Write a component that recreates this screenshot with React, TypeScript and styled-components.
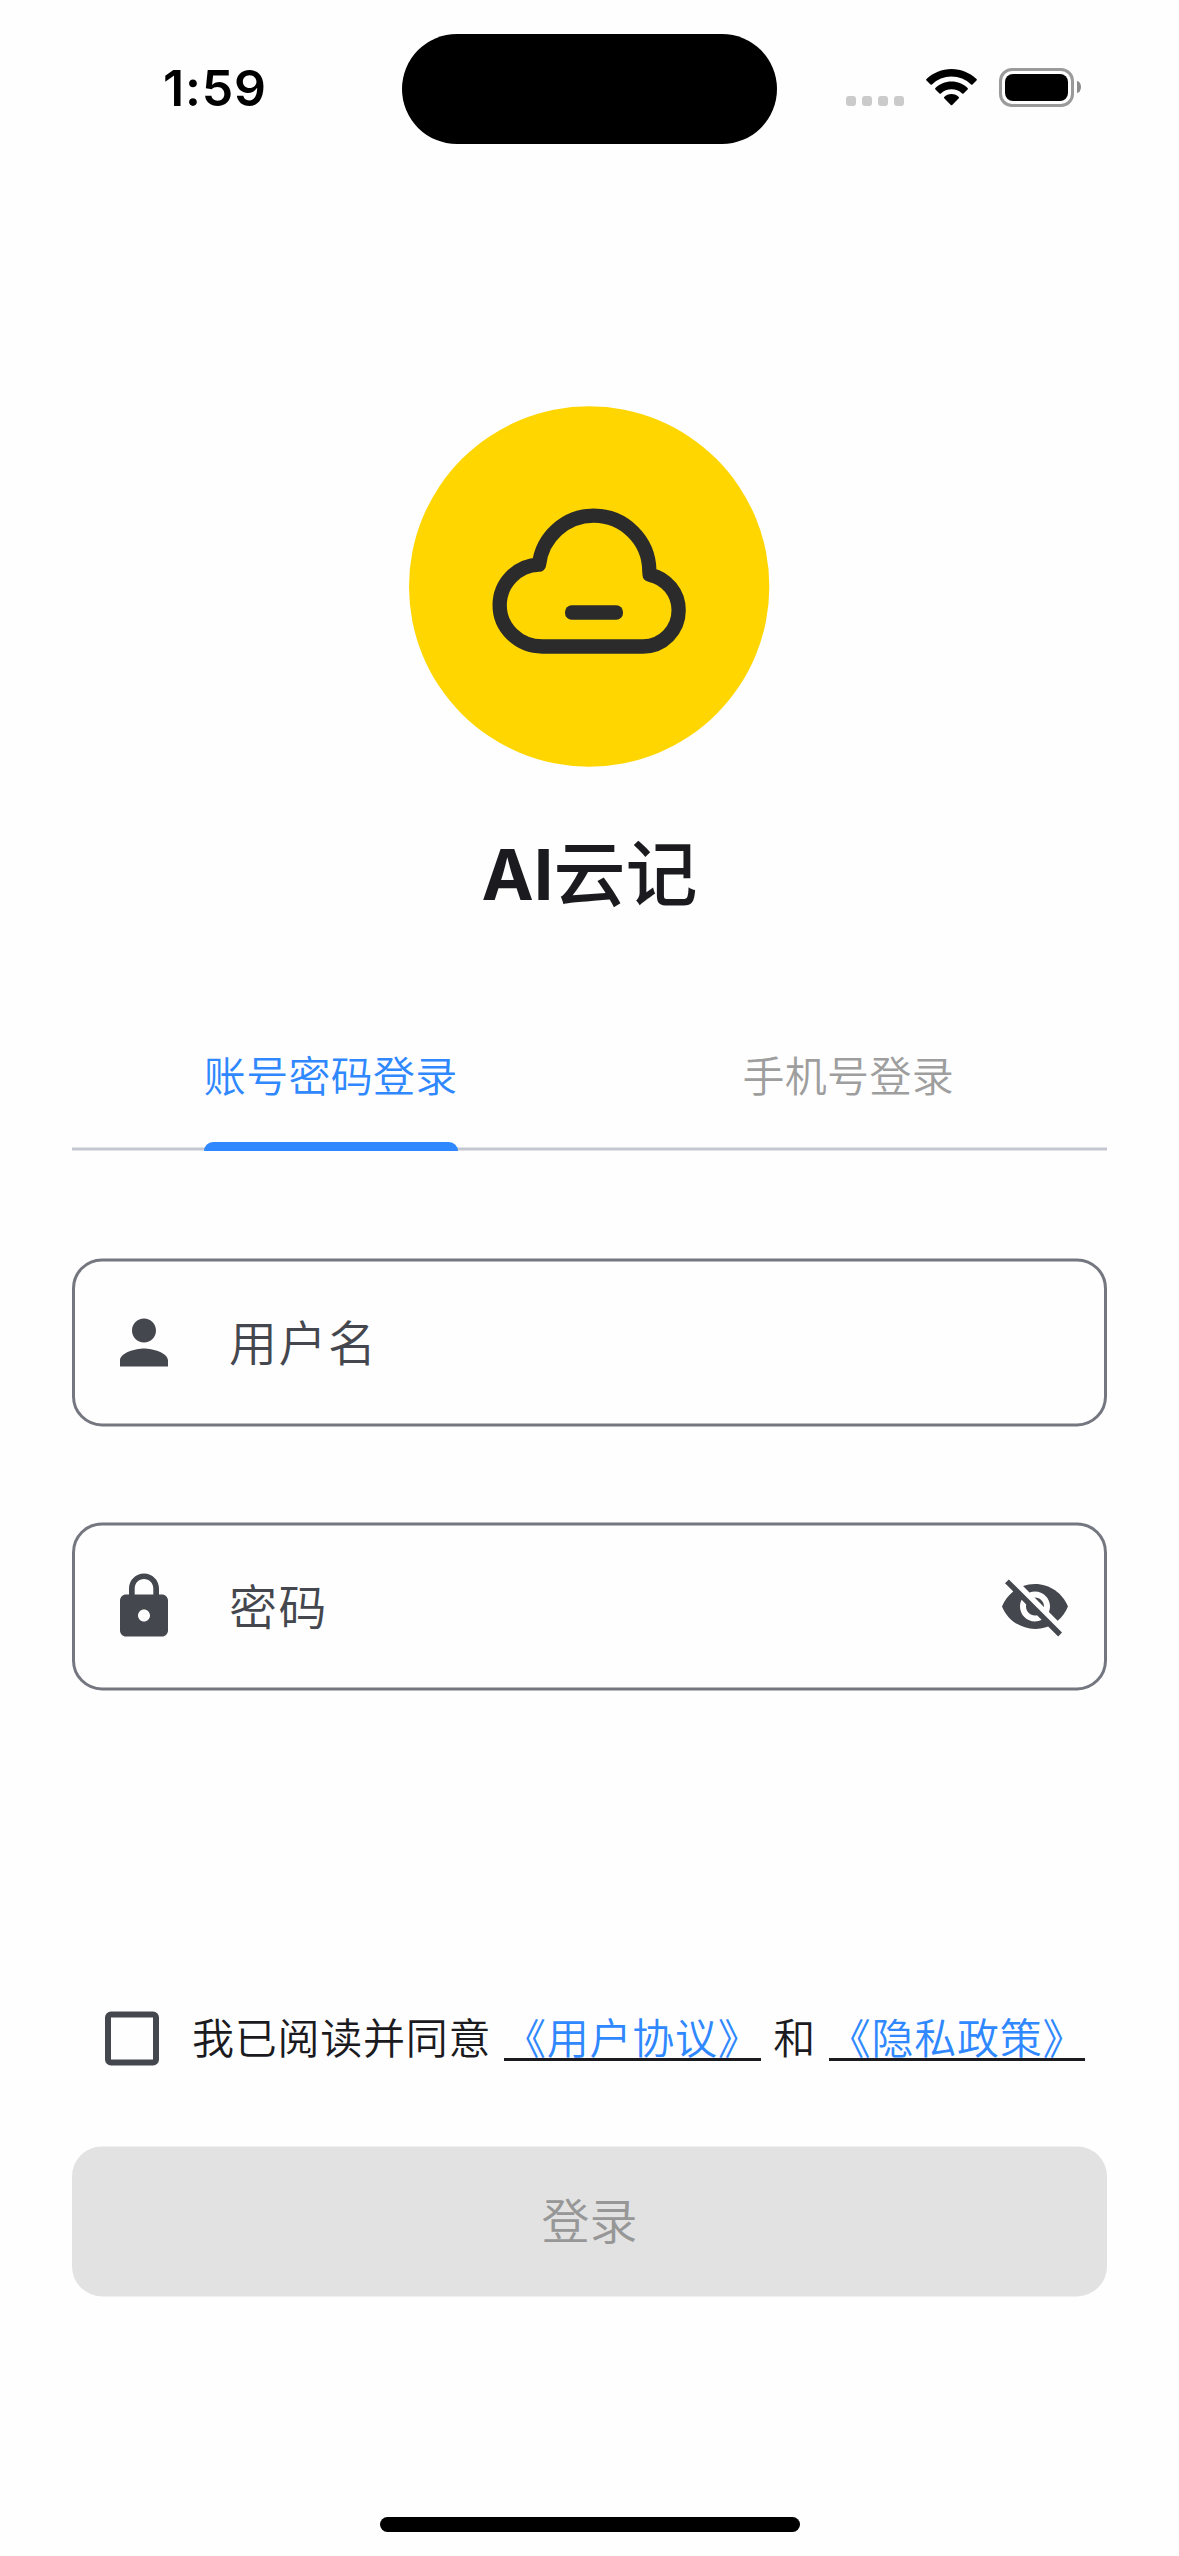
import React, { useState } from 'react';
import styled, { createGlobalStyle } from 'styled-components';

const sans = "'Inter', 'Noto Sans CJK SC', sans-serif";
const cjk = "'Noto Sans CJK SC', sans-serif";
const ink = '#1b1b1f';
const iconInk = '#44474e';
const outline = '#74777f';
const blue = '#2f88ff';

const GlobalStyle = createGlobalStyle`
  *, *::before, *::after { box-sizing: border-box; }
  html, body { margin: 0; padding: 0; background: #fefefe; }
  button { font: inherit; border: 0; background: none; padding: 0; margin: 0; }
`;

const Screen = styled.div`
  width: 1179px;
  height: 2556px;
  display: flex;
  flex-direction: column;
  background: #fefefe;
  color: ${ink};
  font-family: ${cjk};
  overflow: hidden;
`;

const StatusBar = styled.header`
  height: 177px;
  flex: none;
  display: grid;
  grid-template-columns: 402px 375px 402px;
  padding-top: 34px;
`;

const Clock = styled.div`
  padding: 23px 0 0 163px;
  font: 600 50px/62px ${sans};
  letter-spacing: 0.8px;
  color: #000;
`;

const Island = styled.div`
  height: 110px;
  border-radius: 55px;
  background: #000;
`;

const Indicators = styled.div`
  display: flex;
  align-items: flex-start;
  padding: 34px 0 0 69px;
`;

const SignalDots = styled.div`
  display: flex;
  gap: 6px;
  padding-top: 28px;
  margin-right: 22px;
`;

const Dot = styled.i`
  width: 10px;
  height: 10px;
  border-radius: 3px;
  background: #cbcbcb;
`;

const WifiIcon = styled.svg`
  width: 51px;
  height: 38px;
  margin: 1px 22px 0 0;
`;

const BatteryBody = styled.div`
  width: 75px;
  height: 39px;
  padding: 3px;
  border: 3px solid #9a9a9a;
  border-radius: 13px;
`;

const BatteryFill = styled.div`
  height: 27px;
  border-radius: 8px;
  background: #000;
`;

const BatteryCap = styled.div`
  width: 4px;
  height: 12px;
  margin: 13px 0 0 3px;
  border-radius: 0 4px 4px 0 / 0 6px 6px 0;
  background: #8c8c8c;
`;

const Content = styled.main`
  display: flex;
  flex-direction: column;
  padding: 229px 72px 0;
  flex: 1;
`;

const Logo = styled.svg`
  width: 361px;
  height: 361px;
  align-self: center;
  display: block;
`;

const Title = styled.h1`
  margin: 54px 0 0;
  height: 96px;
  font: 500 72px/96px ${cjk};
  text-align: center;
  color: ${ink};
`;

const Latin = styled.span`
  font: 700 70px/96px ${sans};
`;

const Tabs = styled.nav`
  display: grid;
  grid-template-columns: 1fr 1fr;
  justify-items: center;
  height: 144px;
  margin-top: 90px;
  background: linear-gradient(#e2e3e8, #e2e3e8 1px, #c4c6d0 1px, #c4c6d0 3px, #e2e3e8 3px) left bottom / 100% 4px no-repeat;
`;

const Tab = styled.button<{ $active: boolean }>`
  display: flex;
  flex-direction: column;
  justify-content: space-between;
  height: 144px;
  padding-top: 37px;
  font: 350 42px/60px ${cjk};
  letter-spacing: 0.3px;
  color: ${(p) => (p.$active ? blue : '#9e9e9e')};
  &::after {
    content: '';
    height: 9px;
    border-radius: 9px 9px 0 0;
    background: ${(p) => (p.$active ? blue : 'transparent')};
  }
`;

const Field = styled.label<{ $gap: number }>`
  display: flex;
  align-items: center;
  height: 168px;
  margin-top: ${(p) => p.$gap}px;
  padding: 0 33px;
  border: 3px solid ${outline};
  border-radius: 30px;
  transform: translateY(0.4px);
`;

const FieldIcon = styled.svg`
  width: 72px;
  height: 72px;
  flex: none;
  fill: ${iconInk};
`;

const Input = styled.input`
  flex: 1;
  min-width: 0;
  height: 72px;
  margin: 0 0 4px 49px;
  padding: 0;
  border: 0;
  outline: 0;
  background: transparent;
  font: 350 48px/72px ${cjk};
  letter-spacing: 1.5px;
  color: ${ink};
  &::placeholder { color: ${iconInk}; opacity: 1; }
`;

const Agreement = styled.div`
  display: flex;
  align-items: flex-start;
  height: 60px;
  margin-top: 318px;
  padding-left: 33px;
  font: 350 42px/56px ${cjk};
  letter-spacing: 0.75px;
  white-space: nowrap;
`;

const Checkbox = styled.button`
  width: 54px;
  height: 54px;
  margin: 3px 33px 0 0;
  border: 6px solid ${iconInk};
  border-radius: 6px;
  transform: translateY(0.4px);
`;

const Link = styled.a`
  height: 53px;
  margin: 0 12.75px;
  color: ${blue};
  border-bottom: 3px solid ${ink};
`;

const Submit = styled.button`
  height: 150px;
  margin-top: 78px;
  padding-bottom: 5px;
  border-radius: 30px;
  background: #e2e2e2;
  color: #979797;
  font: 350 48px/145px ${cjk};
  transform: translateY(0.4px);
`;

const HomeIndicator = styled.div`
  width: 420px;
  height: 15px;
  margin: 0 auto 24px;
  flex: none;
  border-radius: 8px;
  background: #000;
`;

const tabs = ['账号密码登录', '手机号登录'];

export default function App() {
  const [active, setActive] = useState(0);
  return (
    <Screen>
      <GlobalStyle />
      <StatusBar>
        <Clock>1:59</Clock>
        <Island />
        <Indicators>
          <SignalDots>
            <Dot /><Dot /><Dot /><Dot />
          </SignalDots>
          <WifiIcon viewBox="0 0 51 38">
            <path d="M25.5 0C35.2 0 44 3.8 50.5 10.1Q51.2 10.8 50.5 11.5L46.5 15.5Q45.8 16 45.1 15.4A28.2 28.2 0 0 0 5.9 15.4Q5.2 16 4.5 15.5L.5 11.5Q-.2 10.8 .5 10.1C7 3.8 15.8 0 25.5 0Z" />
            <path d="M25.5 12.5C31.8 12.5 37.5 15 41.6 19Q42.3 19.7 41.6 20.4L37.5 24.4Q36.8 25 36.1 24.4A15.8 15.8 0 0 0 14.9 24.4Q14.2 25 13.5 24.4L9.4 20.4Q8.7 19.7 9.4 19C13.5 15 19.2 12.5 25.5 12.5Z" />
            <path d="M25.5 25C28.4 25 31 26.1 32.8 28Q33.4 28.7 32.8 29.3L26.2 36Q25.5 36.6 24.8 36L18.2 29.3Q17.6 28.7 18.2 28C20 26.1 22.6 25 25.5 25Z" />
          </WifiIcon>
          <BatteryBody><BatteryFill /></BatteryBody>
          <BatteryCap />
        </Indicators>
      </StatusBar>

      <Content>
        <Logo viewBox="58 47 1083 1083">
          <circle cx="598.5" cy="588.5" r="540.5" fill="#ffd600" />
          <path
            d="M458 768.5A128 123.5 0 0 1 330 645A122.1 122.1 0 0 1 448 523A165.6 165.6 0 0 1 612 376A167 167 0 0 1 779 541L780 553A109.2 109.2 0 0 1 867 660A107 108.5 0 0 1 760 768.5Z"
            fill="none" stroke="#2b2b2b" strokeWidth="43" strokeLinejoin="round"
          />
          <rect x="526" y="645" width="174" height="43" rx="20" fill="#2b2b2b" />
        </Logo>
        <Title><Latin>AI</Latin>云记</Title>

        <Tabs>
          {tabs.map((t, i) => (
            <Tab key={t} $active={i === active} onClick={() => setActive(i)}>{t}</Tab>
          ))}
        </Tabs>

        <Field $gap={107}>
          <FieldIcon viewBox="0 0 24 24">
            <path d="M12 12c2.21 0 4-1.79 4-4s-1.79-4-4-4-4 1.79-4 4 1.79 4 4 4zm0 2c-2.67 0-8 1.34-8 4v2h16v-2c0-2.66-5.33-4-8-4z" />
          </FieldIcon>
          <Input placeholder="用户名" />
        </Field>
        <Field $gap={96}>
          <FieldIcon viewBox="0 0 24 24">
            <path d="M18 8h-1V6c0-2.76-2.24-5-5-5S7 3.24 7 6v2H6c-1.1 0-2 .9-2 2v10c0 1.1.9 2 2 2h12c1.1 0 2-.9 2-2V10c0-1.1-.9-2-2-2zm-6 9c-1.1 0-2-.9-2-2s.9-2 2-2 2 .9 2 2-.9 2-2 2zm3.1-9H8.9V6c0-1.71 1.39-3.1 3.1-3.1s3.1 1.39 3.1 3.1v2z" />
          </FieldIcon>
          <Input type="password" placeholder="密码" />
          <FieldIcon viewBox="0 0 24 24">
            <path d="M12 7c2.76 0 5 2.24 5 5 0 .65-.13 1.26-.36 1.83l2.92 2.92c1.51-1.26 2.7-2.89 3.43-4.75-1.73-4.39-6-7.5-11-7.5-1.4 0-2.74.25-3.98.7l2.16 2.16C10.74 7.13 11.35 7 12 7zM2 4.27l2.28 2.28.46.46C3.08 8.3 1.78 10.02 1 12c1.73 4.39 6 7.5 11 7.5 1.55 0 3.03-.3 4.38-.84l.42.42L19.73 22 21 20.73 3.27 3 2 4.27zM7.53 9.8l1.55 1.55c-.05.21-.08.43-.08.65 0 1.66 1.34 3 3 3 .22 0 .44-.03.65-.08l1.55 1.55c-.67.33-1.41.53-2.2.53-2.76 0-5-2.24-5-5 0-.79.2-1.53.53-2.2zm4.31-.78l3.15 3.15.02-.16c0-1.66-1.34-3-3-3l-.17.01z" />
          </FieldIcon>
        </Field>

        <Agreement>
          <Checkbox aria-label="同意" />
          我已阅读并同意
          <Link>《用户协议》</Link>
          和
          <Link>《隐私政策》</Link>
        </Agreement>
        <Submit>登录</Submit>
      </Content>
      <HomeIndicator />
    </Screen>
  );
}
